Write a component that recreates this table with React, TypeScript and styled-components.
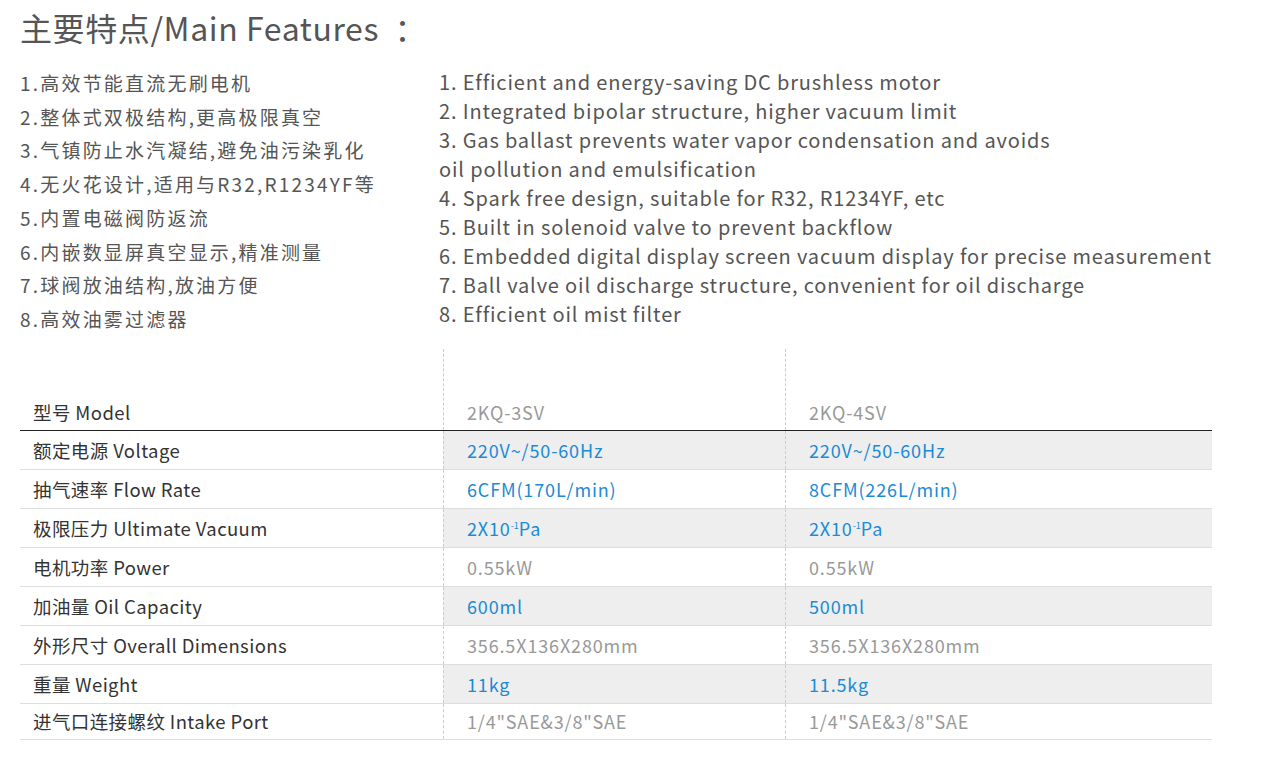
import React from "react";
import styled, { createGlobalStyle } from "styled-components";

const Colors = {
  title: "#555555",
  text: "#555555",
  label: "#333333",
  muted: "#999999",
  blue: "#1a8bd6",
  stripe: "#eeeeee",
  line: "#dddddd",
  dark: "#222222",
  dashed: "#cccccc",
};

const GlobalStyle = createGlobalStyle`
  html, body {
    margin: 0;
    padding: 0;
    background: #ffffff;
  }
  body {
    font-family: "Noto Sans CJK SC", "Noto Sans", sans-serif;
  }
`;

const Page = styled.div`
  width: 1287px;
  padding: 0 0 30px 20px;
  box-sizing: border-box;
`;

const Title = styled.h1`
  margin: 0;
  height: 60px;
  line-height: 54px;
  font-size: 32px;
  font-weight: 400;
  letter-spacing: 0.6px;
  color: ${Colors.title};
`;

const Features = styled.div`
  display: grid;
  grid-template-columns: 419px 1fr;
  margin-top: 6px;
`;

const FeatureList = styled.ul<{ lineHeight: number; size: number; spacing: number; offset?: number }>`
  list-style: none;
  margin: 0;
  padding: ${({ offset }) => offset || 0}px 0 0;
  font-size: ${({ size }) => size}px;
  line-height: ${({ lineHeight }) => lineHeight}px;
  letter-spacing: ${({ spacing }) => spacing}px;
  color: ${Colors.text};
  white-space: nowrap;
`;

const Table = styled.div`
  margin-top: 13px;
  width: 1192px;
`;

const Row = styled.div<{ header?: boolean }>`
  display: grid;
  grid-template-columns: 423px 342px 427px;
  height: ${({ header }) => (header ? 82 : 39)}px;
  border-bottom: 1px solid ${({ header }) => (header ? Colors.dark : Colors.line)};
  box-sizing: border-box;

  &:last-child {
    height: 36px;
  }
`;

const Cell = styled.div<{ kind: "label" | "value"; tone?: "blue" | "muted"; striped?: boolean; header?: boolean }>`
  display: flex;
  align-items: ${({ header }) => (header ? "flex-end" : "center")};
  padding: ${({ kind, header }) =>
    `0 0 ${header ? 5 : 0}px ${kind === "label" ? 13 : 23}px`};
  font-size: ${({ kind }) => (kind === "label" ? 18.5 : 18)}px;
  letter-spacing: ${({ kind }) => (kind === "label" ? 0.4 : 0.85)}px;
  color: ${({ kind, tone }) =>
    kind === "label" ? Colors.label : tone === "blue" ? Colors.blue : Colors.muted};
  background: ${({ striped, kind }) => (striped && kind === "value" ? Colors.stripe : "transparent")};
  border-left: ${({ kind }) => (kind === "value" ? `1px dashed ${Colors.dashed}` : "none")};
  white-space: nowrap;

  sup {
    font-size: 9px;
    position: relative;
    top: -2px;
    letter-spacing: 0;
  }
`;

const zhFeatures = [
  "1.高效节能直流无刷电机",
  "2.整体式双极结构,更高极限真空",
  "3.气镇防止水汽凝结,避免油污染乳化",
  "4.无火花设计,适用与R32,R1234YF等",
  "5.内置电磁阀防返流",
  "6.内嵌数显屏真空显示,精准测量",
  "7.球阀放油结构,放油方便",
  "8.高效油雾过滤器",
];

const enFeatures = [
  "1. Efficient and energy-saving DC brushless motor",
  "2. Integrated bipolar structure, higher vacuum limit",
  "3. Gas ballast prevents water vapor condensation and avoids",
  "oil pollution and emulsification",
  "4. Spark free design, suitable for R32, R1234YF, etc",
  "5. Built in solenoid valve to prevent backflow",
  "6. Embedded digital display screen vacuum display for precise measurement",
  "7. Ball valve oil discharge structure, convenient for oil discharge",
  "8. Efficient oil mist filter",
];

type Spec = {
  label: string;
  values: [React.ReactNode, React.ReactNode];
  tone: "blue" | "muted";
};

const specs: Spec[] = [
  { label: "额定电源 Voltage", values: ["220V~/50-60Hz", "220V~/50-60Hz"], tone: "blue" },
  { label: "抽气速率 Flow Rate", values: ["6CFM(170L/min)", "8CFM(226L/min)"], tone: "blue" },
  {
    label: "极限压力 Ultimate Vacuum",
    values: [
      <>2X10<sup>-1</sup>Pa</>,
      <>2X10<sup>-1</sup>Pa</>,
    ],
    tone: "blue",
  },
  { label: "电机功率 Power", values: ["0.55kW", "0.55kW"], tone: "muted" },
  { label: "加油量 Oil Capacity", values: ["600ml", "500ml"], tone: "blue" },
  { label: "外形尺寸 Overall Dimensions", values: ["356.5X136X280mm", "356.5X136X280mm"], tone: "muted" },
  { label: "重量 Weight", values: ["11kg", "11.5kg"], tone: "blue" },
  { label: "进气口连接螺纹 Intake Port", values: ['1/4"SAE&3/8"SAE', '1/4"SAE&3/8"SAE'], tone: "muted" },
];

export default function App() {
  return (
    <Page>
      <GlobalStyle />
      <Title>主要特点/Main Features{"\u00a0\u00a0"}：</Title>
      <Features>
        <FeatureList lineHeight={33.7} size={19} spacing={2.2}>
          {zhFeatures.map((f) => (
            <li key={f}>{f}</li>
          ))}
        </FeatureList>
        <FeatureList lineHeight={29} size={20} spacing={0.85} offset={1}>
          {enFeatures.map((f) => (
            <li key={f}>{f}</li>
          ))}
        </FeatureList>
      </Features>
      <Table>
        <Row header>
          <Cell kind="label" header>型号 Model</Cell>
          <Cell kind="value" header>2KQ-3SV</Cell>
          <Cell kind="value" header>2KQ-4SV</Cell>
        </Row>
        {specs.map((s, i) => (
          <Row key={s.label}>
            <Cell kind="label">{s.label}</Cell>
            <Cell kind="value" tone={s.tone} striped={i % 2 === 0}>
              {s.values[0]}
            </Cell>
            <Cell kind="value" tone={s.tone} striped={i % 2 === 0}>
              {s.values[1]}
            </Cell>
          </Row>
        ))}
      </Table>
    </Page>
  );
}
